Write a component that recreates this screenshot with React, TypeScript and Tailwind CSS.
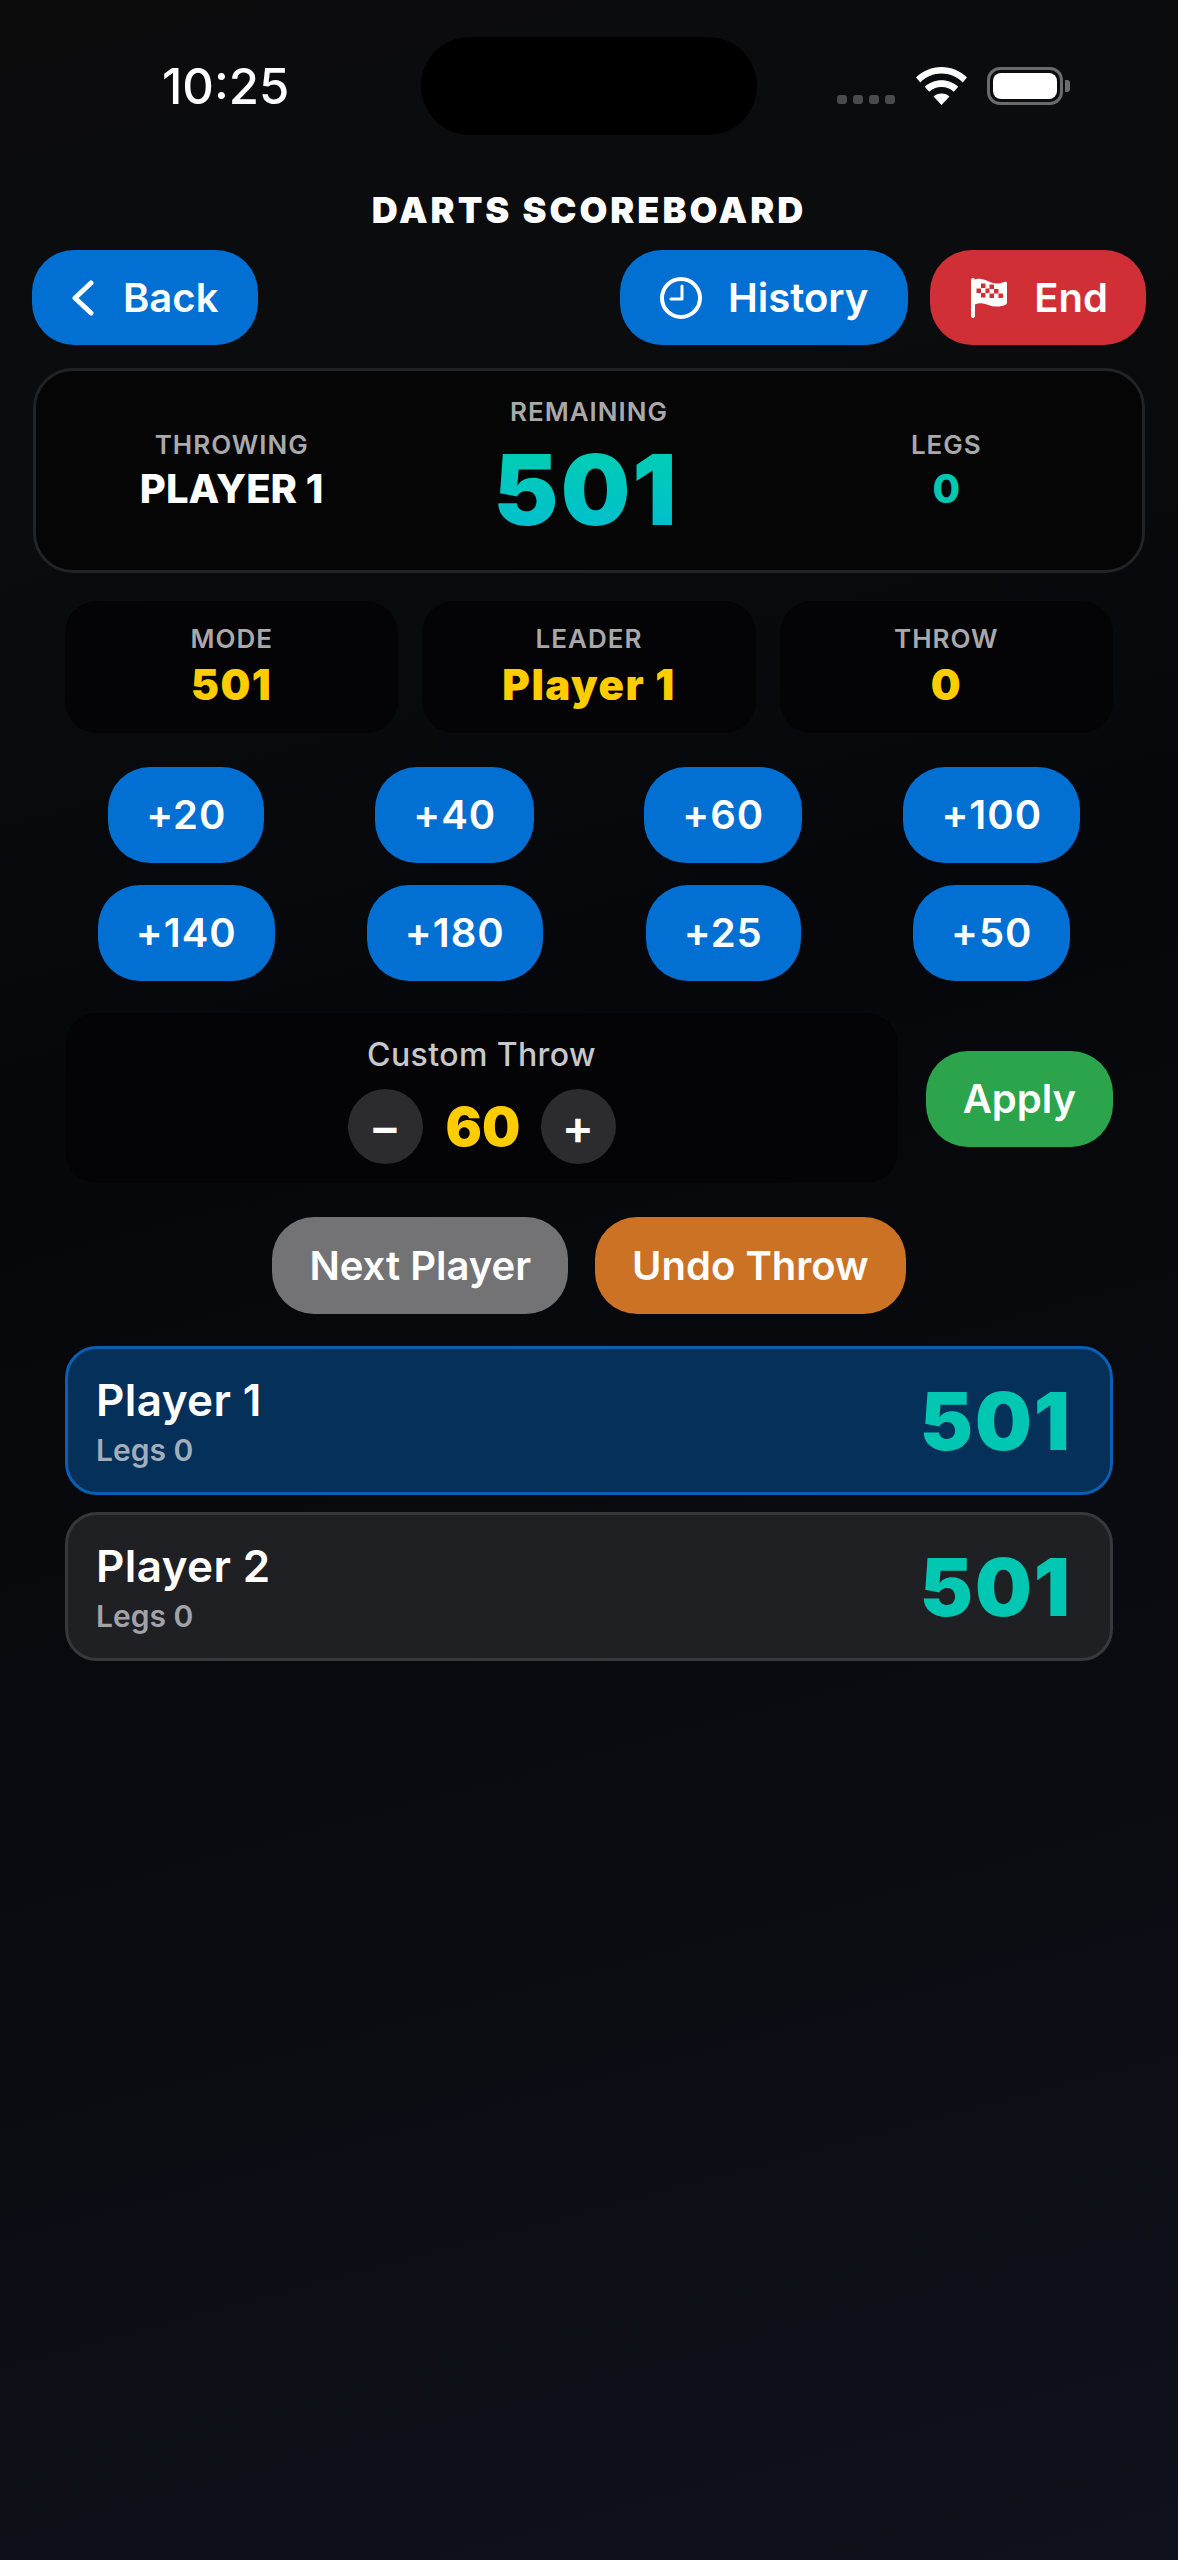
import React from "react";

const panel = "rounded-[32px] bg-[#040406]";
const label = "text-[26px] leading-[32px] font-semibold tracking-[1px] text-[#a9a9ab]";
const throwValues = ["+20", "+40", "+60", "+100", "+140", "+180", "+25", "+50"];

function StatusBar() {
  return (
    <div className="grid h-[98px] grid-cols-[421px_336px_1fr] items-center">
      <span className="pl-[162px] text-[49px] leading-none font-medium text-white">10:25</span>
      <div className="h-[98px] rounded-[49px] bg-black" />
      <div className="flex items-end pl-[80px]">
        <div className="mb-px flex gap-[6px]">
          {[0, 1, 2, 3].map((i) => (
            <span key={i} className="h-[9px] w-[10px] rounded-[3px] bg-[#4a4a4c]" />
          ))}
        </div>
        <svg className="ml-[21px]" width="51" height="38" viewBox="0 0 51 38" fill="#fff">
          <path d="M25.5 0C15.6 0 7 3.700 0 10.400l4.300 5C10.300 9.600 17.500 6.600 25.500 6.600s15.200 3 21.200 8.800l4.300-5C44 3.700 35.400 0 25.500 0Z" />
          <path d="M25.500 13.200c-6.500 0-12.200 2.400-16.700 6.600l4.400 5c3.200-3 7.400-4.800 12.300-4.800s9.100 1.800 12.300 4.800l4.400-5c-4.500-4.200-10.200-6.600-16.700-6.600Z" />
          <path d="M25.500 26.500c-3.200 0-5.900 1.100-8 3L25.500 38l8-8.500c-2.100-1.900-4.800-3-8-3Z" />
        </svg>
        <div className="ml-[20px] flex items-center">
          <div className="flex h-[38px] w-[76px] items-center justify-center rounded-[13px] border-[3px] border-[#6b6b6d]">
            <div className="h-[26px] w-[64px] rounded-[8px] bg-white" />
          </div>
          <div className="ml-[2px] h-[12px] w-[5px] rounded-r-[3px] bg-[#6b6b6d]" />
        </div>
      </div>
    </div>
  );
}

function TopButton({ className, children }: { className: string; children: React.ReactNode }) {
  return (
    <button className={`flex h-[95px] items-center rounded-[42px] text-[40px] leading-none font-semibold text-white ${className}`}>
      {children}
    </button>
  );
}

function FlagIcon() {
  return (
    <svg width="36" height="40" viewBox="0 0 36 40">
      <path
        fill="#fff"
        fillRule="evenodd"
        d="M2 0C1 0 0 .800 0 2v36c0 1.200.900 2 2 2s2-.800 2-2V26.500c2.500-1.200 5-1.600 8-1 4 .800 8 3 13 3 4 0 8-.800 9.500-1.800.900-.600 1.500-1.200 1.500-2.200V5.500c0-1.500-1.300-2-2.500-1.500-2.500 1-5.500 1.700-9 1.500C20 5.200 16.500 2.500 11.500 1.300 8.500.600 6 .700 3.800 1.400 3.400.500 2.800 0 2 0Z M10 5.500h4.500V10H10Z M18.500 6.500H23V11h-4.500Z M5.500 10.500H10V15H5.500Z M14.500 10.500h4V15h-4Z M23 11h4.500v4.500H23Z M10 15h4.500v4.500H10Z M18.500 15.500H23V20h-4.500Z M27.500 15.500H32V20h-4.500Z"
      />
    </svg>
  );
}

function Stat({ title, value }: { title: string; value: string }) {
  return (
    <div className={`${panel} flex flex-col items-center pt-[22px]`}>
      <span className={label}>{title}</span>
      <span className="mt-[6px] text-[42px] leading-[48px] font-black tracking-[1.5px] text-[#ffcc00]">{value}</span>
    </div>
  );
}

function PlayerRow({ name, active }: { name: string; active?: boolean }) {
  return (
    <div
      className={`flex h-[149px] items-center justify-between rounded-[32px] border-[3px] pr-[38px] pl-[28px] ${
        active ? "border-[#0a5fb4] bg-[#05305a]" : "border-[#37383b] bg-[#1f2024]"
      }`}
    >
      <div className="flex flex-col">
        <span className="text-[44px] leading-[52px] font-semibold tracking-[0.4px] text-white">{name}</span>
        <span className={`mt-[6px] text-[30px] leading-[36px] font-semibold ${active ? "text-[#a0adba]" : "text-[#a3a3a7]"}`}>
          Legs 0
        </span>
      </div>
      <span className="text-[80px] leading-none font-black tracking-[2px] text-[#00c7b2]">501</span>
    </div>
  );
}

export default function App() {
  return (
    <div className="min-h-[2560px] bg-linear-[165deg,#0c0c0d_0%,#0b0c0e_18%,#06070a_40%,#0b0c11_70%,#0f111c_100%] pt-[37px] font-[family-name:Inter,sans-serif]">
      <StatusBar />

      <h1 className="mt-[53px] text-center text-[36px] leading-[44px] font-black tracking-[3px] text-white">
        DARTS SCOREBOARD
      </h1>

      {/* Верхние кнопки */}
      <div className="mx-[32px] mt-[18px] flex items-center justify-between">
        <TopButton className="gap-[28px] bg-[#0270d2] pr-[40px] pl-[39px]">
          <svg width="24" height="36" viewBox="0 0 24 36" fill="none" stroke="#fff" strokeWidth="5" strokeLinecap="round" strokeLinejoin="round">
            <path d="M20 3 4 18l16 15" />
          </svg>
          Back
        </TopButton>
        <div className="flex items-center gap-[22px]">
          <TopButton className="gap-[26px] bg-[#0270d2] px-[40px]">
            <svg width="42" height="42" viewBox="0 0 42 42" fill="none" stroke="#fff" strokeWidth="4" strokeLinecap="round" strokeLinejoin="round">
              <circle cx="21" cy="21" r="19" />
              <path d="M22 9v13H11" strokeWidth="3" />
            </svg>
            History
          </TopButton>
          <TopButton className="gap-[27px] bg-[#cf2f35] pr-[38px] pl-[41px]">
            <FlagIcon />
            End
          </TopButton>
        </div>
      </div>

      {/* Текущий игрок */}
      <div className="mx-[33px] mt-[23px] grid h-[205px] grid-cols-3 items-center rounded-[40px] border-[3px] border-[#222324] bg-[#050506] px-[17px]">
        <div className="flex flex-col items-center">
          <span className={label}>THROWING</span>
          <span className="mt-[5px] text-[40px] leading-[46px] font-extrabold text-white">PLAYER 1</span>
        </div>
        <div className="mb-[6px] flex flex-col items-center">
          <span className={label}>REMAINING</span>
          <span className="mt-[12px] mr-[6px] bg-linear-to-b from-[#00cfb0] to-[#00bdd0] bg-clip-text text-[98px] leading-[100px] font-black tracking-[2px] text-transparent">
            501
          </span>
        </div>
        <div className="flex flex-col items-center">
          <span className={label}>LEGS</span>
          <span className="mt-[5px] text-[40px] leading-[46px] font-extrabold text-[#00c7b2]">0</span>
        </div>
      </div>

      <div className="mx-[65px] mt-[28px] flex flex-col">
        <div className="grid h-[132px] grid-cols-3 gap-[24px]">
          <Stat title="MODE" value="501" />
          <Stat title="LEADER" value="Player 1" />
          <Stat title="THROW" value="0" />
        </div>

        <div className="mt-[34px] grid grid-cols-4 gap-x-[26px] gap-y-[22px]">
          {throwValues.map((v) => (
            <div key={v} className="flex justify-center">
              <button className="h-[96px] rounded-[42px] bg-[#0270d2] px-[38px] text-[40px] leading-none font-semibold tracking-[1px] text-white">
                {v}
              </button>
            </div>
          ))}
        </div>

        {/* Свой бросок */}
        <div className="mt-[32px] flex items-center justify-between">
          <div className={`${panel} flex h-[170px] w-[833px] flex-col items-center pt-[22px]`}>
            <span className="text-[32px] leading-[40px] font-medium tracking-[0.4px] text-[#c8c8ca]">Custom Throw</span>
            <div className="mt-[14px] flex items-center gap-[23px]">
              <button className="flex size-[75px] items-center justify-center rounded-full bg-[#2c2c2e] text-[48px] leading-none font-semibold text-white">
                −
              </button>
              <span className="w-[72px] text-center text-[54px] leading-none font-black text-[#ffcc00]">60</span>
              <button className="flex size-[75px] items-center justify-center rounded-full bg-[#2c2c2e] text-[48px] leading-none font-semibold text-white">
                +
              </button>
            </div>
          </div>
          <button className="mt-[2px] h-[96px] rounded-[42px] bg-[#2ba44c] px-[37px] text-[40px] leading-none font-semibold text-white">
            Apply
          </button>
        </div>

        <div className="mt-[34px] flex justify-center gap-[27px]">
          <button className="h-[97px] rounded-[42px] bg-[#737376] px-[37px] text-[40px] leading-none font-semibold text-white">
            Next Player
          </button>
          <button className="h-[97px] rounded-[42px] bg-[#cc7224] px-[37px] text-[40px] leading-none font-semibold text-white">
            Undo Throw
          </button>
        </div>

        <div className="mt-[32px] flex flex-col gap-[17px]">
          <PlayerRow name="Player 1" active />
          <PlayerRow name="Player 2" />
        </div>
      </div>
    </div>
  );
}
